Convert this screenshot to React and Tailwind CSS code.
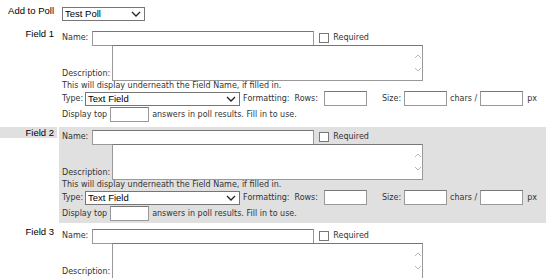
import React from 'react'

// ── Fonts ──────────────────────────────────────────────────────────────────────
const LABEL = "font-['Liberation_Sans',Arial,sans-serif] text-[9.5px] leading-[11px] text-black"
const BODY = "font-['DejaVu_Sans',Verdana,sans-serif] text-[8px] leading-[10px] text-[#333]"

// ── Small controls ─────────────────────────────────────────────────────────────
const Chevron = ({ className = '', color = '#222' }) => (
    <svg width="10" height="6" viewBox="0 0 10 6" className={className}>
        <path d="M1 1l4 4 4-4" stroke={color} strokeWidth="1.3" fill="none" />
    </svg>
)

const Select = ({ value, className = '' }) => (
    <div className={`relative h-[14px] border border-[#767676] bg-white ${className}`}>
        <span className="absolute left-[2px] top-[0px] font-['Liberation_Sans',Arial,sans-serif] text-[9.5px] leading-[12px] text-black">
            {value}
        </span>
        <Chevron className="absolute right-[3px] top-[3px]" />
    </div>
)

const Box = ({ className = '' }) => (
    <input type="text" className={`h-[15px] border border-[#999] border-t-[#777] bg-white outline-none ${className}`} />
)

const Area = () => (
    <div className="relative ml-[2px] w-[311px] h-[36px]">
        <textarea className="w-full h-full border border-[#999] border-t-[#777] bg-white resize-none outline-none block" />
        <svg width="8" height="5" viewBox="0 0 8 5" className="absolute right-[1px] top-[9px]">
            <path d="M1 4l3-3 3 3" stroke="#b8b8b8" strokeWidth="1" fill="none" />
        </svg>
        <svg width="8" height="5" viewBox="0 0 8 5" className="absolute right-[1px] bottom-[9px]">
            <path d="M1 1l3 3 3-3" stroke="#b8b8b8" strokeWidth="1" fill="none" />
        </svg>
    </div>
)

// ── Field block ────────────────────────────────────────────────────────────────
const FieldBlock = ({ n, shaded }) => (
    <>
        <div>
            <div className={`${LABEL} text-right pr-[3px] ${shaded ? 'bg-[#e0e0e0]' : ''}`}>Field {n}</div>
        </div>
        <div className={`${BODY} h-[96px] pt-[3px] pl-[3px] flex flex-col ${shaded ? 'bg-[#e0e0e0]' : ''}`}>
            {/* Name */}
            <div className="flex items-center h-[14px]">
                <span>Name:</span>
                <Box className="ml-[4px] w-[222px] h-[14px]" />
                <span className="ml-[5px] w-[10px] h-[10px] border border-[#777] bg-white" />
                <span className="ml-[4px]">Required</span>
            </div>

            {/* Description */}
            <div className="flex items-end">
                <span className="mb-[2px]">Description:</span>
                <Area />
            </div>

            <div>This will display underneath the Field Name, if filled in.</div>

            {/* Type / formatting */}
            <div className="flex items-center h-[15px]">
                <span>Type:</span>
                <Select value="Text Field" className="ml-[2px] w-[155px]" />
                <span className="ml-[3px]">Formatting:</span>
                <span className="ml-[5px]">Rows:</span>
                <Box className="ml-[6px] w-[43px]" />
                <span className="ml-[15px]">Size:</span>
                <Box className="ml-[3px] w-[43px]" />
                <span className="ml-[3px]">chars /</span>
                <Box className="ml-[3px] w-[43px]" />
                <span className="ml-[4px]">px</span>
            </div>

            {/* Display top */}
            <div className="flex items-center h-[15px] mt-[1px]">
                <span>Display top</span>
                <Box className="ml-[3px] w-[39px] h-[14px]" />
                <span className="ml-[3px]">answers in poll results. Fill in to use.</span>
            </div>
        </div>
    </>
)

export default function App() {
    return (
        <div className="w-[546px] h-[278px] overflow-hidden bg-white">
            <div className="grid grid-cols-[57px_1fr] gap-x-[2px] gap-y-[3px]">
                {/* Add to Poll */}
                <div className={`${LABEL} text-right pr-[3px] pt-[5px]`}>Add to Poll</div>
                <div className="pt-[7px] pb-[4px] pl-[3px]">
                    <Select value="Test Poll" className="w-[83px]" />
                </div>

                <FieldBlock n={1} />
                <FieldBlock n={2} shaded />
                <FieldBlock n={3} />
            </div>
        </div>
    )
}
